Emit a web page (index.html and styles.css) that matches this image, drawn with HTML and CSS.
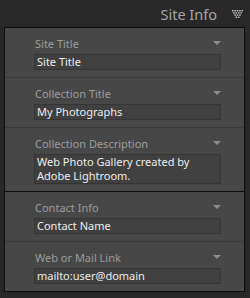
FILE: index.html
```html
<!DOCTYPE html>
<html lang="en">
<head>
    <meta charset="UTF-8">
    <meta name="viewport" content="width=device-width, initial-scale=1.0">
    <title>Site Info</title>
    <link rel="stylesheet" href="styles.css">
</head>
<body>
    <div class="header">
        <span class="header-title">Site Info</span>
        <svg class="header-icon" width="11" height="9" viewBox="0 0 11 9">
            <g fill="#d8d8d8">
                <rect x="0" y="0" width="1.4" height="1.4"/><rect x="2.4" y="0" width="1.4" height="1.4"/><rect x="4.8" y="0" width="1.4" height="1.4"/><rect x="7.2" y="0" width="1.4" height="1.4"/><rect x="9.6" y="0" width="1.4" height="1.4"/>
                <rect x="1.2" y="2.2" width="1.4" height="1.4"/><rect x="3.6" y="2.2" width="1.4" height="1.4"/><rect x="6" y="2.2" width="1.4" height="1.4"/><rect x="8.4" y="2.2" width="1.4" height="1.4"/>
                <rect x="2.4" y="4.4" width="1.4" height="1.4"/><rect x="4.8" y="4.4" width="1.4" height="1.4"/><rect x="7.2" y="4.4" width="1.4" height="1.4"/>
                <rect x="3.6" y="6.6" width="1.4" height="1.4"/><rect x="6" y="6.6" width="1.4" height="1.4"/>
            </g>
        </svg>
    </div>
    <div class="panel">
        <div class="group">
            <div class="item">
                <div class="label">Site Title <span class="arrow"></span></div>
                <div class="field">Site Title</div>
            </div>
            <div class="item">
                <div class="label">Collection Title <span class="arrow"></span></div>
                <div class="field">My Photographs</div>
            </div>
            <div class="item">
                <div class="label">Collection Description <span class="arrow"></span></div>
                <div class="field multi">Web Photo Gallery created by<br>Adobe Lightroom.</div>
            </div>
        </div>
        <div class="group">
            <div class="item">
                <div class="label">Contact Info <span class="arrow"></span></div>
                <div class="field">Contact Name</div>
            </div>
            <div class="item">
                <div class="label">Web or Mail Link <span class="arrow"></span></div>
                <div class="field">mailto:user@domain</div>
            </div>
        </div>
    </div>
</body>
</html>
```

FILE: styles.css
```css
body {
    margin: 0;
    background-color: #282828;
    font-family: "Noto Sans", "Open Sans", sans-serif;
    width: 250px;
    height: 298px;
    overflow: hidden;
}
.header {
    height: 27px;
    display: flex;
    align-items: center;
    justify-content: flex-end;
    padding-right: 7px;
}
.header-title {
    color: #a4a4a4;
    font-size: 14.5px;
    margin-right: 15px;
}
.header-icon {
    margin-top: 2px;
}
.panel {
    margin-left: 4px;
    width: 241px;
    box-sizing: border-box;
    border: 1px solid #0e0e0e;
    background-color: #474747;
}
.group + .group {
    border-top: 1px solid #0e0e0e;
}
.item {
    padding: 7px 23px 7px 29px;
    border-bottom: 1px solid #3a3a3a;
}
.item:last-child {
    border-bottom: none;
}
.label {
    display: flex;
    justify-content: space-between;
    align-items: center;
    height: 16px;
    margin-bottom: 3px;
    padding-left: 1px;
    color: #9c9c9c;
    font-size: 11px;
}
.arrow {
    width: 0;
    height: 0;
    border-left: 4px solid transparent;
    border-right: 4px solid transparent;
    border-top: 4px solid #8c8c8c;
    margin-top: -1px;
}
.field {
    height: 16px;
    box-sizing: border-box;
    border: 1px solid #353535;
    background-color: #404040;
    color: #ececec;
    font-size: 11px;
    line-height: 14px;
    padding-left: 2px;
    white-space: nowrap;
}
.field.multi {
    height: 30px;
}
```
